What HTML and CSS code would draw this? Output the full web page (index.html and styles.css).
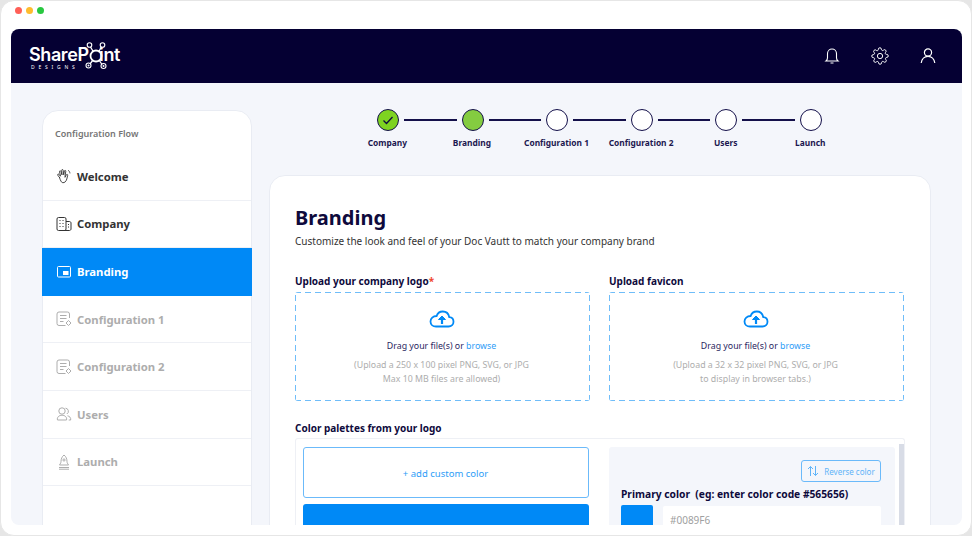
FILE: index.html
```html
<!DOCTYPE html>
<html>
<head>
	<title>Branding</title>
	<meta charset="utf-8">
	<link rel="stylesheet" href="styles.css">
</head>
<body>
    <div class="window">
        <div class="window-dots">
            <span class="dot dot-red"></span>
            <span class="dot dot-yellow"></span>
            <span class="dot dot-green"></span>
        </div>

        <div class="app">
            <header class="topbar">
                <div class="logo">
                    <div class="logo-name">ShareP<span class="logo-o">o</span>int</div>
                    <div class="logo-sub">DESIGNS</div>
                    <svg class="logo-nodes" width="30" height="30" viewBox="0 0 30 30" fill="none" stroke="#fff">
                        <circle cx="15" cy="15" r="5.500" stroke-width="1.800"/>
                        <path d="M9.500 6l3 5M20.500 6l-3 5M9 23l3-4M21 23.500l-3-4.500" stroke-width="1.300"/>
                        <circle cx="8.500" cy="4" r="2.300" stroke-width="1.100"/>
                        <circle cx="21.500" cy="4" r="2.300" stroke-width="1.100"/>
                        <circle cx="7.500" cy="24.500" r="2.500" stroke-width="1.100"/>
                        <circle cx="22.500" cy="25" r="2.500" stroke-width="1.100"/>
                        <circle cx="7.500" cy="24.500" r="1" fill="#fff" stroke="none"/>
                        <circle cx="22.500" cy="25" r="1" fill="#fff" stroke="none"/>
                    </svg>
                </div>
                <div class="topbar-icons">
                    <svg width="18" height="18" viewBox="0 0 18 18" fill="none" stroke="#fff" stroke-width="1.100">
                        <path d="M3 14h12c-1-.8-1.500-1.800-1.500-3.200V6.500a4.500 4.500 0 0 0-9 0v4.300C4.500 12.200 4 13.200 3 14z"/>
                        <path d="M7.500 16h3"/>
                    </svg>
                    <svg width="18" height="18" viewBox="0 0 24 24" fill="none" stroke="#fff" stroke-width="1.300" stroke-linejoin="round">
                        <circle cx="12" cy="12" r="3.500"/>
                        <path d="M19.400 15a1.650 1.650 0 0 0 .33 1.820l.06.06a2 2 0 1 1-2.830 2.830l-.06-.06a1.650 1.650 0 0 0-2.800 1.170V21a2 2 0 1 1-4 0v-.09a1.650 1.650 0 0 0-2.880-1.110l-.06.06a2 2 0 1 1-2.830-2.830l.06-.06a1.650 1.650 0 0 0-1.170-2.800H3a2 2 0 1 1 0-4h.09A1.650 1.650 0 0 0 4.200 7.290l-.06-.06a2 2 0 1 1 2.830-2.830l.06.06a1.650 1.650 0 0 0 2.800-1.170V3a2 2 0 1 1 4 0v.09a1.650 1.650 0 0 0 2.800 1.170l.06-.06a2 2 0 1 1 2.830 2.830l-.06.06a1.650 1.650 0 0 0 1.170 2.800H21a2 2 0 1 1 0 4h-.09a1.650 1.650 0 0 0-1.510 1.110z"/>
                    </svg>
                    <svg width="18" height="18" viewBox="0 0 18 18" fill="none" stroke="#fff" stroke-width="1.200">
                        <circle cx="9" cy="5.500" r="3.600"/>
                        <path d="M2.200 16c.5-3.800 3.200-6.600 6.800-6.600s6.300 2.800 6.800 6.600"/>
                    </svg>
                </div>
            </header>

            <div class="page">
                <aside class="sidebar">
                    <div class="sidebar-title">Configuration Flow</div>
                    <a class="nav-item">
                        <svg width="16" height="16" viewBox="0 0 16 16" fill="none" stroke="#333" stroke-width=".9" stroke-linecap="round" stroke-linejoin="round">
                            <path d="M3.500 9.500L1.800 7.300c-.6-.9.500-1.700 1.200-.9l1.500 1.800-1-4.500c-.2-1 1.100-1.300 1.400-.4l1.100 3.600-.3-4.600c0-1 1.400-1 1.500 0l.5 4.500.7-3.800c.2-.9 1.500-.7 1.400.2L9 8.300v1l1.400-2.600c.5-.8 1.600-.2 1.300.6L10.800 11c-.7 2.700-2.300 3.800-4 3.700-1.500-.1-2.400-2.300-3.300-5.200z"/>
                            <path d="M12.500 2.500c.8.600 1.300 1.500 1.400 2.500"/>
                        </svg>
                        Welcome
                    </a>
                    <a class="nav-item">
                        <svg width="16" height="16" viewBox="0 0 16 16" fill="none" stroke="#333" stroke-width="1">
                            <rect x="1" y="1.500" width="9" height="13" rx="1.500"/>
                            <path d="M10 5.500h3.500c.8 0 1.500.7 1.500 1.500v6c0 .8-.7 1.500-1.500 1.500H3"/>
                            <path d="M3.500 4.500h1M6.500 4.500h1M3.500 7.500h1M6.500 7.500h1M3.500 10.500h1M6.500 10.500h1M12 8.500h1M12 11h1" stroke-width="1.200"/>
                        </svg>
                        Company
                    </a>
                    <a class="nav-item nav-active">
                        <svg width="16" height="16" viewBox="0 0 16 16" fill="none" stroke="#fff" stroke-width="1">
                            <rect x="1.500" y="2.500" width="13" height="10.500" rx="1"/>
                            <rect x="7" y="7" width="5.500" height="4" fill="#fff" stroke="none"/>
                        </svg>
                        Branding
                    </a>
                    <a class="nav-item nav-locked">
                        <svg width="16" height="16" viewBox="0 0 16 16" fill="none" stroke="#adadad" stroke-width="1">
                            <path d="M13.500 7V3a2 2 0 0 0-2-2H3a2 2 0 0 0-2 2v9.500a2 2 0 0 0 2 2h6.500"/>
                            <path d="M4 4.500h6.500M4 7.500h6.500M4 10.500h3.500"/>
                            <path d="M12.500 9.500l2.500 2.500-2.500 2.500-2.500-2.500z"/>
                        </svg>
                        Configuration 1
                    </a>
                    <a class="nav-item nav-locked">
                        <svg width="16" height="16" viewBox="0 0 16 16" fill="none" stroke="#adadad" stroke-width="1">
                            <path d="M13.500 7V3a2 2 0 0 0-2-2H3a2 2 0 0 0-2 2v9.500a2 2 0 0 0 2 2h6.500"/>
                            <path d="M4 4.500h6.500M4 7.500h6.500M4 10.500h3.500"/>
                            <path d="M12.500 9.500l2.500 2.500-2.500 2.500-2.500-2.500z"/>
                        </svg>
                        Configuration 2
                    </a>
                    <a class="nav-item nav-locked">
                        <svg width="16" height="16" viewBox="0 0 16 16" fill="none" stroke="#adadad" stroke-width="1">
                            <circle cx="6" cy="5" r="3.200"/>
                            <path d="M9.500 2.200a3.100 3.100 0 0 1 1.300 5.800"/>
                            <path d="M1.500 14c-.8-2.600 1.500-4.800 4.500-4.800s5.300 2.200 4.500 4.800z"/>
                            <path d="M11.500 9.800c2 .4 3.500 1.800 3.200 4.200h-2"/>
                        </svg>
                        Users
                    </a>
                    <a class="nav-item nav-locked">
                        <svg width="16" height="16" viewBox="0 0 16 16" fill="none" stroke="#adadad" stroke-width="1">
                            <path d="M8 1C6 2.500 5 5 5 7.500c0 1-.3 1.700-1.500 3.500h9c-1.200-1.800-1.500-2.500-1.500-3.500C11 5 10 2.500 8 1z"/>
                            <circle cx="8" cy="6" r="1.100"/>
                            <path d="M3 13.500h10M3 15.200h10"/>
                        </svg>
                        Launch
                    </a>
                </aside>

                <main class="content">
                    <div class="stepper">
                        <div class="step-track">
                            <span class="step-circle step-done">
                                <svg width="14" height="14" viewBox="0 0 14 14" fill="none" stroke="#0e0a3c" stroke-width="1.300"><path d="M2.500 7.500l3 3 6-6.500"/></svg>
                            </span>
                            <span class="step-line"></span>
                            <span class="step-circle step-current"></span>
                            <span class="step-line"></span>
                            <span class="step-circle"></span>
                            <span class="step-line"></span>
                            <span class="step-circle"></span>
                            <span class="step-line"></span>
                            <span class="step-circle"></span>
                            <span class="step-line"></span>
                            <span class="step-circle"></span>
                        </div>
                        <div class="step-labels">
                            <span>Company</span>
                            <span>Branding</span>
                            <span>Configuration 1</span>
                            <span>Configuration 2</span>
                            <span>Users</span>
                            <span>Launch</span>
                        </div>
                    </div>

                    <section class="card">
                        <h1 class="card-title">Branding</h1>
                        <p class="card-sub">Customize the look and feel of your Doc Vautt to match your company brand</p>

                        <div class="upload-grid">
                            <div>
                                <div class="field-label">Upload your company logo<span class="required">*</span></div>
                                <div class="dropzone">
                                    <svg class="cloud" width="26" height="20" viewBox="0 0 26 20" fill="none" stroke="#0089f6" stroke-width="1.800">
                                        <path d="M7 17.500h12.500c3 0 5-2 5-4.700 0-2.500-1.800-4.400-4.200-4.600C19.600 4.800 17 2.500 13.800 2.500c-3 0-5.400 1.900-6.200 4.500C4 7 1.500 9.400 1.500 12.400c0 2.900 2.300 5.100 5.500 5.100z"/>
                                        <path d="M13 15V10" stroke-width="2.200"/>
                                        <path d="M9.500 10.500L13 7l3.500 3.500z" fill="#0089f6" stroke-width="1"/>
                                    </svg>
                                    <div class="drop-text">Drag your file(s) or <a class="browse">browse</a></div>
                                    <div class="drop-hint">(Upload a 250 x 100 pixel PNG, SVG, or JPG<br>Max 10 MB files are allowed)</div>
                                </div>
                            </div>
                            <div>
                                <div class="field-label">Upload favicon</div>
                                <div class="dropzone">
                                    <svg class="cloud" width="26" height="20" viewBox="0 0 26 20" fill="none" stroke="#0089f6" stroke-width="1.800">
                                        <path d="M7 17.500h12.500c3 0 5-2 5-4.700 0-2.500-1.800-4.400-4.200-4.600C19.600 4.800 17 2.500 13.800 2.500c-3 0-5.400 1.900-6.200 4.500C4 7 1.500 9.400 1.500 12.400c0 2.900 2.300 5.100 5.500 5.100z"/>
                                        <path d="M13 15V10" stroke-width="2.200"/>
                                        <path d="M9.500 10.500L13 7l3.500 3.500z" fill="#0089f6" stroke-width="1"/>
                                    </svg>
                                    <div class="drop-text">Drag your file(s) or <a class="browse">browse</a></div>
                                    <div class="drop-hint">(Upload a 32 x 32 pixel PNG, SVG, or JPG<br>to display in browser tabs.)</div>
                                </div>
                            </div>
                        </div>

                        <div class="field-label palette-label">Color palettes from your logo</div>
                        <div class="palette">
                            <div class="palette-left">
                                <button class="add-color">+ add custom color</button>
                                <div class="palette-swatch"></div>
                            </div>
                            <div class="palette-right">
                                <div class="reverse-row">
                                    <button class="reverse-btn">
                                        <svg width="12" height="12" viewBox="0 0 12 12" fill="none" stroke="#5fb4f8" stroke-width="1">
                                            <path d="M3.500 11V1.500M1 4l2.500-2.500L6 4M8.500 1v9.500M6 8l2.500 2.500L11 8"/>
                                        </svg>
                                        Reverse color
                                    </button>
                                </div>
                                <div class="field-label primary-label">Primary color&nbsp; (eg: enter color code #565656)</div>
                                <div class="color-row">
                                    <span class="color-chip"></span>
                                    <input class="color-input" type="text" placeholder="#0089F6">
                                </div>
                            </div>
                            <div class="scrollbar"></div>
                        </div>
                    </section>
                </main>
            </div>
        </div>
    </div>
</body>
</html>
```

FILE: styles.css
```css
* {
    box-sizing: border-box;
}
html, body {
    margin: 0;
    height: 100%;
    overflow: hidden;
}
body {
    background-color: #e6e6e6;
    font-family: "Noto Sans", "Open Sans", sans-serif;
}
.window {
    height: 536px;
    padding: 0 9px 10px 10px;
    background-color: #fff;
    border: 1px solid #e6e6e6;
    border-radius: 14px;
    display: flex;
    flex-direction: column;
}
.window-dots {
    display: flex;
    gap: 4px;
    height: 28px;
    padding: 6px 0 0 3.500px;
}
.dot {
    width: 7px;
    height: 7px;
    border-radius: 50%;
}
.dot-red {
    background-color: #ff5f57;
}
.dot-yellow {
    background-color: #febc2e;
}
.dot-green {
    background-color: #28c840;
}
.app {
    flex: 1;
    min-height: 0;
    display: flex;
    flex-direction: column;
    background-color: #f4f6fb;
    border-radius: 8px;
    overflow: hidden;
}
.topbar {
    height: 54px;
    flex-shrink: 0;
    padding: 0 25px 0 18px;
    background-color: #050033;
    display: flex;
    align-items: center;
    justify-content: space-between;
}
.logo {
    position: relative;
    color: #fff;
    padding-top: 5px;
}
.logo-name {
    font-family: "Inter", "Noto Sans", sans-serif;
    font-size: 18px;
    font-weight: 600;
    letter-spacing: -.4px;
    line-height: 18px;
}
.logo-o {
    color: transparent;
}
.logo-sub {
    font-size: 5px;
    letter-spacing: 3.800px;
    line-height: 7px;
    margin-left: 2px;
}
.logo-nodes {
    position: absolute;
    left: 52px;
    top: 0;
}
.topbar-icons {
    display: flex;
    gap: 30px;
}
.page {
    flex: 1;
    min-height: 0;
    display: flex;
    gap: 17px;
    padding: 26px 31px 0 31px;
}
.sidebar {
    width: 210px;
    flex-shrink: 0;
    height: 440px;
    margin-top: 1px;
    background-color: #fff;
    border: 1px solid #e9ecf3;
    border-radius: 16px 16px 0 0;
}
.sidebar-title {
    height: 42px;
    padding: 17px 12px 0;
    font-size: 9px;
    font-weight: 600;
    line-height: 12px;
    color: #757575;
}
.nav-item {
    height: 47.600px;
    padding-left: 13px;
    display: flex;
    align-items: center;
    gap: 5px;
    font-size: 11.300px;
    font-weight: 700;
    color: #333;
    border-bottom: 1px solid #eef0f5;
}
.nav-active {
    margin: 0 -1px;
    padding-left: 14px;
    background-color: #0089f6;
    color: #fff;
    border-bottom: 0;
}
.nav-locked {
    color: #adadad;
}
.content {
    flex: 1;
    min-width: 0;
}
.stepper {
    height: 66px;
    padding-left: 108px;
}
.step-track {
    display: flex;
    align-items: center;
    gap: 5px;
}
.step-circle {
    width: 22px;
    height: 22px;
    flex-shrink: 0;
    background-color: #fff;
    border: 1.500px solid #14104a;
    border-radius: 50%;
    display: flex;
    align-items: center;
    justify-content: center;
}
.step-done {
    background-color: #7ed321;
}
.step-current {
    background-color: #84cc40;
}
.step-line {
    width: 52.600px;
    height: 1.500px;
    background-color: #14104a;
}
.step-labels {
    display: grid;
    grid-template-columns: repeat(6, 84.600px);
    margin: 6px 0 0 -32px;
    font-size: 8.400px;
    font-weight: 700;
    line-height: 12px;
    color: #1c1850;
    text-align: center;
}
.card {
    height: 420px;
    padding: 27px 25px 0;
    background-color: #fff;
    border: 1px solid #e9ecf3;
    border-radius: 16px 16px 0 0;
}
.card-title {
    margin: 0;
    font-size: 20px;
    font-weight: 700;
    line-height: 30px;
    color: #0e0a3c;
}
.card-sub {
    margin: 1px 0 0;
    font-size: 10px;
    line-height: 14px;
    color: #333;
}
.upload-grid {
    display: grid;
    grid-template-columns: 295px 295px;
    gap: 19px;
    margin-top: 26px;
}
.field-label {
    font-size: 10px;
    font-weight: 700;
    line-height: 14px;
    color: #0e0a3c;
}
.required {
    color: #f0452e;
}
.dropzone {
    height: 109px;
    margin-top: 4px;
    background-image:
        repeating-linear-gradient(90deg, #6fbdf9 0 6px, transparent 6px 10px),
        repeating-linear-gradient(90deg, #6fbdf9 0 6px, transparent 6px 10px),
        repeating-linear-gradient(0deg, #6fbdf9 0 6px, transparent 6px 10px),
        repeating-linear-gradient(0deg, #6fbdf9 0 6px, transparent 6px 10px);
    background-size: 100% 1px, 100% 1px, 1px 100%, 1px 100%;
    background-position: 0 0, 0 100%, 0 0, 100% 0;
    background-repeat: no-repeat;
    border-radius: 3px;
    display: flex;
    flex-direction: column;
    align-items: center;
    padding: 17px 2px 0 0;
}
.drop-text {
    margin-top: 11px;
    font-size: 8.800px;
    line-height: 12px;
    color: #2a2660;
}
.browse {
    color: #2e9df7;
}
.drop-hint {
    margin-top: 6px;
    font-size: 8.800px;
    line-height: 14px;
    color: #adadad;
    text-align: center;
}
.palette-label {
    margin-top: 20px;
}
.palette {
    position: relative;
    height: 100px;
    margin-top: 3px;
    padding: 8px 0 0 7px;
    border: 1px solid #eef0f5;
    border-bottom: 0;
    border-radius: 3px 3px 0 0;
    display: flex;
    gap: 20px;
}
.palette-left {
    width: 286px;
    flex-shrink: 0;
}
.add-color {
    display: block;
    width: 100%;
    height: 51px;
    padding: 1px 1px 0 0;
    background-color: #fff;
    border: 1px solid #6bbafa;
    border-radius: 3px;
    font-family: inherit;
    font-size: 9.500px;
    color: #2e9df7;
}
.palette-swatch {
    height: 50px;
    margin-top: 6px;
    background-color: #0089f6;
    border-radius: 3px;
}
.palette-right {
    width: 286px;
    flex-shrink: 0;
    padding: 13px 14px 0 12px;
    background-color: #f4f6fb;
    border-radius: 3px 3px 0 0;
}
.reverse-row {
    display: flex;
    justify-content: flex-end;
    margin-bottom: 5px;
}
.reverse-btn {
    width: 80px;
    height: 22px;
    padding: 0;
    background-color: transparent;
    border: 1px solid #6bbafa;
    border-radius: 3px;
    font-family: inherit;
    font-size: 8px;
    color: #5fb4f8;
    display: flex;
    align-items: center;
    justify-content: center;
    gap: 5px;
}
.primary-label {
    font-size: 10.250px;
}
.color-row {
    display: flex;
    gap: 10px;
    margin-top: 4px;
}
.color-chip {
    width: 32px;
    height: 32px;
    flex-shrink: 0;
    background-color: #0089f6;
    border-radius: 2px;
}
.color-input {
    flex: 1;
    min-width: 0;
    height: 32px;
    margin-top: 1px;
    padding: 0 7px 4px;
    background-color: #fff;
    border: 0;
    border-radius: 2px;
    font-family: inherit;
    font-size: 10px;
}
.color-input::placeholder {
    color: #a0a0a0;
}
.scrollbar {
    position: absolute;
    top: 5px;
    right: 0;
    width: 5px;
    height: 95px;
    background-color: #d8dce6;
}
```
